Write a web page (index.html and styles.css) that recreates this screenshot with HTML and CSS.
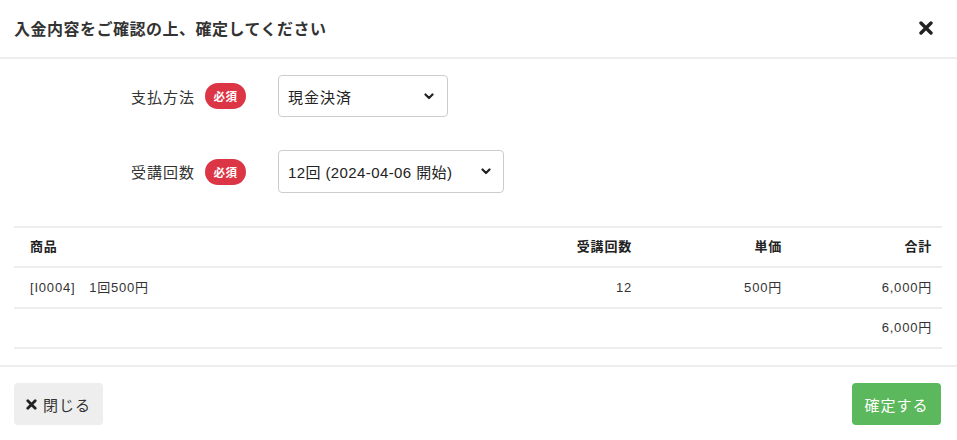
FILE: index.html
```html
<!DOCTYPE html>
<html lang="ja">
<head>
<meta charset="utf-8">
<title>入金内容の確認</title>
<link rel="stylesheet" href="styles.css">
</head>
<body>
<div class="modal">
  <header class="modal-header">
    <h1 class="modal-title">入金内容をご確認の上、確定してください</h1>
    <button class="icon-close" type="button" aria-label="閉じる">
      <svg width="14" height="14" viewBox="0 0 14 14"><path d="M2 2 L12 12 M12 2 L2 12" stroke="#222" stroke-width="3.4" stroke-linecap="round"/></svg>
    </button>
  </header>
  <main class="modal-body">
    <div class="form">
      <div class="form-row">
        <div class="label-cell"><span class="label">支払方法</span><span class="badge">必須</span></div>
        <div class="select select-pay"><span>現金決済</span>
          <svg class="chev" width="10" height="7" viewBox="0 0 10 7"><path d="M1.5 1.5 L5 5 L8.5 1.5" fill="none" stroke="#222" stroke-width="2.2" stroke-linecap="round" stroke-linejoin="round"/></svg>
        </div>
      </div>
      <div class="form-row">
        <div class="label-cell"><span class="label">受講回数</span><span class="badge">必須</span></div>
        <div class="select select-count"><span>12回 (2024-04-06 開始)</span>
          <svg class="chev" width="10" height="7" viewBox="0 0 10 7"><path d="M1.5 1.5 L5 5 L8.5 1.5" fill="none" stroke="#222" stroke-width="2.2" stroke-linecap="round" stroke-linejoin="round"/></svg>
        </div>
      </div>
    </div>
    <table class="items">
      <thead>
        <tr><th class="c-name">商品</th><th class="num">受講回数</th><th class="num">単価</th><th class="num">合計</th></tr>
      </thead>
      <tbody>
        <tr class="row-item"><td>[I0004]　1回500円</td><td class="num">12</td><td class="num">500円</td><td class="num">6,000円</td></tr>
        <tr class="row-total"><td></td><td></td><td></td><td class="num">6,000円</td></tr>
      </tbody>
    </table>
  </main>
  <footer class="modal-footer">
    <button class="btn btn-close" type="button">
      <svg width="11" height="11" viewBox="0 0 11 11"><path d="M1.8 1.8 L9.2 9.2 M9.2 1.8 L1.8 9.2" stroke="#222" stroke-width="2.8" stroke-linecap="round"/></svg>
      <span>閉じる</span>
    </button>
    <button class="btn btn-ok" type="button">確定する</button>
  </footer>
</div>
</body>
</html>
```

FILE: styles.css
```css
* { box-sizing: border-box; }
html, body { margin: 0; padding: 0; background: #fff; }
body {
  font-family: "Liberation Sans", "Noto Sans CJK JP", sans-serif;
  color: #333;
  width: 957px;
  height: 440px;
  overflow: hidden;
}
.modal { display: flex; flex-direction: column; }

.modal-header {
  height: 59px;
  border-bottom: 2px solid #eee;
  display: flex;
  align-items: center;
  justify-content: space-between;
  padding: 0 24px 2px 14px;
}
.modal-title {
  margin: 0;
  font-size: 16px;
  font-weight: bold;
  letter-spacing: 0.5px;
  color: #333;
}
.icon-close {
  border: 0;
  background: none;
  padding: 0;
  width: 14px;
  height: 14px;
  display: block;
  cursor: pointer;
}
.icon-close svg { display: block; }

.modal-body { padding: 16px 15px 16px 14px; }

.form { display: flex; flex-direction: column; gap: 33px; margin-bottom: 33px; }
.form-row {
  display: grid;
  grid-template-columns: 232px auto;
  column-gap: 32px;
  align-items: center;
}
.label-cell {
  display: flex;
  justify-content: flex-end;
  align-items: center;
  gap: 10px;
}
.label { font-size: 15px; letter-spacing: 1px; color: #333; }
.badge {
  display: inline-flex;
  align-items: center;
  justify-content: center;
  width: 41px;
  height: 26px;
  border-radius: 13px;
  background: #dc3545;
  color: #fff;
  font-size: 11.5px;
  font-weight: bold;
  letter-spacing: 0.5px;
}
.select {
  display: flex;
  align-items: center;
  justify-content: space-between;
  height: 42px;
  padding: 0 13px 0 9px;
  border: 1px solid #ccc;
  border-radius: 4px;
  font-size: 15px;
  color: #222;
  background: #fff;
}
.select-pay { width: 170px; letter-spacing: 1px; }
.select-count { width: 226px; height: 43px; letter-spacing: 0.4px; padding-right: 12px; }
.chev { display: block; }

.items {
  width: 100%;
  border-collapse: collapse;
  font-size: 13px;
  letter-spacing: 0.8px;
  color: #333;
}
.items th, .items td {
  border-top: 2px solid #eee;
  padding: 0 10px 0 16px;
  line-height: 16px;
  text-align: left;
}
.items th { height: 40px; font-weight: bold; color: #222; }
.items .num { text-align: right; width: 150px; }
.row-item td { height: 41px; }
.row-total td { height: 40px; border-bottom: 2px solid #eee; }

.modal-footer {
  border-top: 2px solid #eee;
  display: flex;
  justify-content: space-between;
  align-items: center;
  padding: 16px 16px 15px 14px;
}
.btn {
  height: 42px;
  width: 89px;
  border: 0;
  border-radius: 4px;
  font-family: inherit;
  font-size: 15px;
  letter-spacing: 1px;
  display: inline-flex;
  align-items: center;
  justify-content: center;
  cursor: pointer;
}
.btn-close { background: #eee; color: #333; gap: 6px; padding: 0 10px 0 12px; justify-content: flex-start; }
.btn-close svg { display: block; }
.btn-ok { background: #5cb85c; color: #fff; }
```
